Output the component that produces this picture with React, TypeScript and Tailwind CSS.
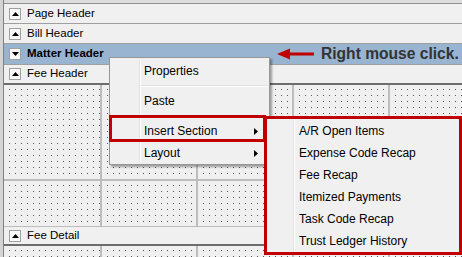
const dots =
  "bg-[#f0f0f0] bg-[conic-gradient(at_1px_1px,transparent_75%,#555_0)] bg-[length:6px_6px] bg-[position:5px_4px]";

function Toggle({ down = false }: { down?: boolean }) {
  return (
    <span className="w-[12px] h-[12px] border border-[#a0a0a0] bg-[#fafafa] flex items-center justify-center shrink-0">
      <svg width="7" height="4" viewBox="0 0 7 4">
        {down ? <path d="M0 0h7L3.5 4z" fill="#000" /> : <path d="M0 4h7L3.5 0z" fill="#000" />}
      </svg>
    </span>
  );
}

function Band({
  label,
  h,
  bold = false,
  blue = false,
  down = false,
  border = "border-b border-[#a0a0a0]",
}: {
  label: string;
  h: string;
  bold?: boolean;
  blue?: boolean;
  down?: boolean;
  border?: string;
}) {
  return (
    <div className={`${h} ${border} ${blue ? "bg-[#99b4d1]" : "bg-[#f0f0f0]"} flex items-center pl-[5px] gap-[6px]`}>
      <Toggle down={down} />
      <span className={`text-[11.5px] text-black ${bold ? "font-bold" : ""}`}>{label}</span>
    </div>
  );
}

function Arrow() {
  return (
    <svg width="9" height="9" viewBox="0 0 9 9">
      <path d="M2 1l4 3.5L2 8z" fill="#000" />
    </svg>
  );
}

const subItems = [
  "A/R Open Items",
  "Expense Code Recap",
  "Fee Recap",
  "Itemized Payments",
  "Task Code Recap",
  "Trust Ledger History",
];

export default function App() {
  return (
    <div className="relative w-[462px] h-[257px] overflow-hidden bg-[#f0f0f0] font-['Liberation_Sans',Arial,sans-serif] flex">
      {/* left gutter */}
      <div className="w-[4px] bg-[#d4d4d4] border-r border-[#808080] shrink-0" />

      <div className="flex-1 flex flex-col">
        <div className="h-[4px] bg-[#dcdcdc] border-b border-[#909090]" />
        <Band label="Page Header" h="h-[20px]" />
        <Band label="Bill Header" h="h-[20px]" />
        <Band label="Matter Header" h="h-[21px]" bold blue down />
        <Band label="Fee Header" h="h-[20px]" border="border-b-2 border-[#6d6d6d]" />

        {/* dotted design area */}
        <div className="h-[142px] grid grid-cols-[96px_94px_94px_94px_1fr] grid-rows-[94px_1fr] gap-[2px] bg-[#bdbdbd] border-b border-[#bdbdbd]">
          {Array.from({ length: 10 }).map((_, i) => (
            <div key={i} className={dots} />
          ))}
        </div>

        <Band label="Fee Detail" h="h-[19px]" border="border-b-2 border-[#6d6d6d]" />

        <div className="flex-1 grid grid-cols-[96px_94px_94px_94px_1fr] gap-[2px] bg-[#bdbdbd]">
          {Array.from({ length: 5 }).map((_, i) => (
            <div key={i} className={dots} />
          ))}
        </div>
      </div>

      {/* annotation */}
      <div className="absolute left-[277px] top-[44px] h-[20px] flex items-center gap-[7px]">
        <svg width="37" height="12" viewBox="0 0 37 12">
          <path d="M0 6L13 0.5V4.5H37V7.5H13V11.5z" fill="#c00000" />
        </svg>
        <span className="text-[15.6px] font-bold text-[#333] whitespace-nowrap">Right mouse click.</span>
      </div>

      {/* context menu */}
      <div className="absolute left-[109px] top-[57px] w-[161px] h-[108px] bg-[#f0f0f0] border border-[#979797] shadow-[2px_2px_2px_rgba(0,0,0,0.35)] py-[2px] text-[12px] text-black">
        <div className="absolute left-[29px] top-[2px] bottom-[2px] w-[2px] border-l border-[#e2e2e2] border-r border-r-white" />
        <div className="relative h-[22px] flex items-center pl-[34px]">Properties</div>
        <div className="relative h-[8px] flex items-center pl-[31px] pr-[2px]">
          <div className="w-full h-[2px] border-t border-[#e0e0e0] border-b border-b-white" />
        </div>
        <div className="relative h-[22px] flex items-center pl-[34px]">Paste</div>
        <div className="relative h-[8px] flex items-center pl-[31px] pr-[2px]">
          <div className="w-full h-[2px] border-t border-[#e0e0e0] border-b border-b-white" />
        </div>
        <div className="relative h-[22px] flex items-center justify-between pl-[34px] pr-[8px]">
          Insert Section
          <Arrow />
        </div>
        <div className="relative h-[22px] flex items-center justify-between pl-[34px] pr-[8px]">
          Layout
          <Arrow />
        </div>
      </div>

      {/* highlight around Insert Section */}
      <div className="absolute left-[109px] top-[115px] w-[157px] h-[27px] border-[3px] border-[#c00000]" />

      {/* submenu */}
      <div className="absolute left-[264px] top-[116px] w-[198px] h-[139px] bg-[#f0f0f0] border-[3px] border-[#c00000] py-[1px] text-[12px] text-black">
        <div className="absolute left-[26px] top-0 bottom-0 w-[2px] border-l border-[#e2e2e2] border-r border-r-white" />
        {subItems.map((item) => (
          <div key={item} className="relative h-[22px] flex items-center pl-[32px]">
            {item}
          </div>
        ))}
      </div>
    </div>
  );
}
